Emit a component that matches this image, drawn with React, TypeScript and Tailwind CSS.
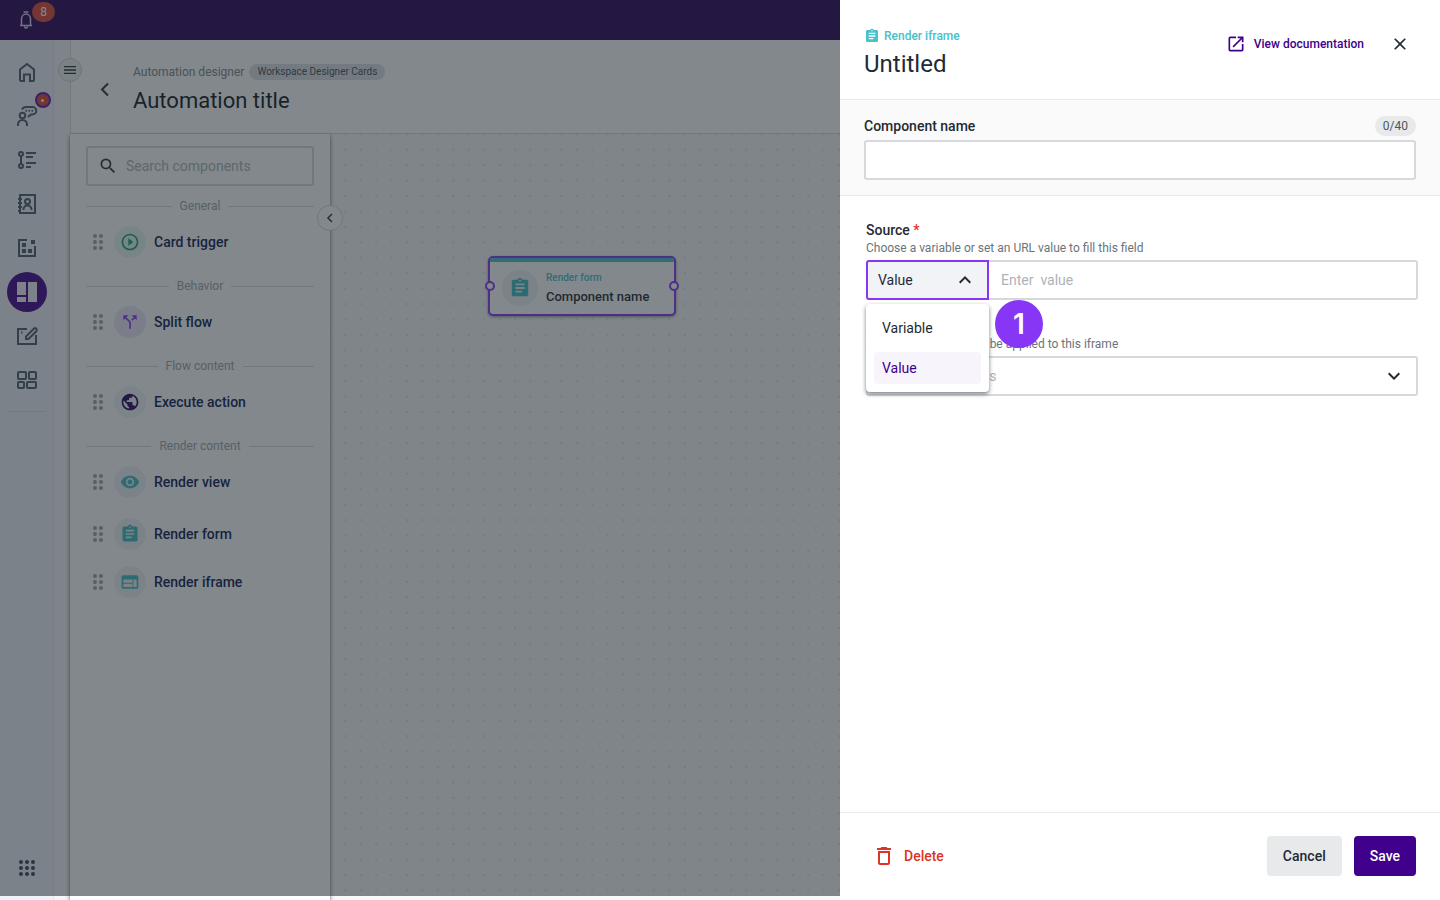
import { ReactNode, useState } from 'react'
import {
  MdAssignment,
  MdCallSplit,
  MdClose,
  MdDeleteOutline,
  MdKeyboardArrowDown,
  MdKeyboardArrowUp,
  MdMenu,
  MdOpenInNew,
  MdPlayCircleOutline,
  MdPublic,
  MdSearch,
  MdRemoveRedEye,
  MdWeb,
} from 'react-icons/md'

interface PaletteItem {
  label: string
  icon: ReactNode
  bg: string
}

interface PaletteSection {
  title: string
  groups: PaletteItem[][]
}

const sections: PaletteSection[] = [
  {
    title: 'General',
    groups: [[{ label: 'Card trigger', icon: <MdPlayCircleOutline className="size-5 text-[#10a56e]" />, bg: 'bg-[#eaf6f3]' }]],
  },
  {
    title: 'Behavior',
    groups: [[{ label: 'Split flow', icon: <MdCallSplit className="size-5 text-[#8836f5]" />, bg: 'bg-[#efe8fb]' }]],
  },
  {
    title: 'Flow content',
    groups: [[{ label: 'Execute action', icon: <MdPublic className="size-5 text-[#29005c]" />, bg: 'bg-[#f1f3f8]' }]],
  },
  {
    title: 'Render content',
    groups: [
      [{ label: 'Render view', icon: <MdRemoveRedEye className="size-5 text-[#3fbac4]" />, bg: 'bg-[#eff3f8]' }],
      [
        { label: 'Render form', icon: <MdAssignment className="size-5 text-[#3fbac4]" />, bg: 'bg-[#eff3f8]' },
        { label: 'Render iframe', icon: <MdWeb className="size-5 text-[#3fbac4]" />, bg: 'bg-[#eff3f8]' },
      ],
    ],
  },
]

function Glyph({ children }: { children: ReactNode }) {
  return (
    <svg className="size-6" viewBox="0 0 24 24" fill="none" stroke="currentColor" strokeWidth={2}>
      {children}
    </svg>
  )
}

const navItems = [
  {
    label: 'Home',
    icon: (
      <Glyph>
        <path d="M5 20V9.5l7-5.5 7 5.5V20a1 1 0 0 1-1 1h-3v-6.500H9V21H6a1 1 0 0 1-1-1z" />
      </Glyph>
    ),
  },
  {
    label: 'Conversations',
    icon: (
      <Glyph>
        <circle cx="7.500" cy="11.500" r="2.800" />
        <path d="M3 22v-1.500a4.500 4.500 0 0 1 9 0V22" />
        <path d="M7 5.500C7.800 4 9 3 11 3h6.500a3.700 3.700 0 0 1 0 7.500H16l-3 2.500" />
        <path d="M10.500 6.800h1.500M13.500 6.800H15M16.500 6.800H18" />
      </Glyph>
    ),
  },
  {
    label: 'Flows',
    icon: (
      <Glyph>
        <circle cx="6" cy="6" r="2" />
        <circle cx="6" cy="18" r="2" />
        <path d="M6 8v8M11 5h10M11 9h7M11 15h10M11 19h5" />
      </Glyph>
    ),
  },
  {
    label: 'Contacts',
    icon: (
      <Glyph>
        <path d="M5 3h15v18H5zM3 7h4M3 11h4M3 15h4M3 19h2" />
        <circle cx="12.500" cy="9.500" r="2.500" />
        <path d="M8.500 18v-.5a4 4 0 0 1 8 0v.5" />
      </Glyph>
    ),
  },
  {
    label: 'Reports',
    icon: (
      <Glyph>
        <path d="M12 4H4v16h16V10" />
        <path d="M16 4h4v4h-4zM7 7h4v4H7zM7 13h4v4H7zM13 13h4v4h-4z" fill="currentColor" stroke="none" />
      </Glyph>
    ),
  },
  {
    label: 'Workspace',
    active: true,
    icon: (
      <Glyph>
        <path d="M2 2h9v13H2zM2 17h9v5H2zM13 2h9v20h-9z" fill="currentColor" stroke="none" />
      </Glyph>
    ),
  },
  {
    label: 'Editor',
    icon: (
      <Glyph>
        <path d="M12 5H3v15h18v-9M6 8.500h1.500" />
        <path d="M11 12.500 19 4.500a1.800 1.800 0 0 1 2.500 2.500l-8 8H11z" />
      </Glyph>
    ),
  },
  {
    label: 'Modules',
    icon: (
      <Glyph>
        <rect x="3" y="4" width="8" height="7" rx="1" />
        <rect x="14" y="4" width="7" height="7" rx="1" />
        <rect x="3" y="14" width="6" height="6" rx="1" />
        <rect x="12" y="14" width="9" height="6" rx="1" />
      </Glyph>
    ),
  },
]

function TopBar() {
  return (
    <header className="flex h-10 shrink-0 items-center bg-[#290058] pl-[14px]">
      <button type="button" aria-label="Notifications" className="relative text-[#d9cdee]">
        <svg className="size-6" viewBox="0 0 24 24" fill="none" stroke="currentColor" strokeWidth={1.500}>
          <path d="M9.500 4h5M6 17.500h12M7.500 17.500V11a4.500 5 0 0 1 9 0v6.500M10.500 18.500a1.500 1.500 0 0 0 3 0" />
        </svg>
        <span className="absolute -top-[6px] left-[18px] flex h-5 w-[23px] items-center justify-center rounded-full bg-[#e04434] text-xs text-white">
          8
        </span>
      </button>
    </header>
  )
}

function SideNav() {
  return (
    <nav className="flex w-[54px] shrink-0 flex-col items-center border-r border-[#e4e5ee] bg-[#f1f1fa] pt-3 pb-3">
      <ul className="flex flex-col gap-1">
        {navItems.map((item) => (
          <li key={item.label} className="relative">
            <button
              type="button"
              aria-label={item.label}
              className={
                item.active
                  ? 'flex size-10 items-center justify-center rounded-full bg-[#40008c] text-[#f4f2fb]'
                  : 'flex size-10 items-center justify-center text-[#4b5b68]'
              }
            >
              {item.icon}
            </button>
            {item.label === 'Conversations' && (
              <span className="absolute -top-1 left-7 flex size-4 items-center justify-center rounded-full border-2 border-[#5a14b8] bg-[#e04434]">
                <span className="size-[3px] rounded-full bg-white" />
              </span>
            )}
          </li>
        ))}
      </ul>
      <hr className="mt-[11px] w-[38px] border-[#dcdde8]" />
      <button type="button" aria-label="All apps" className="mt-auto flex size-10 items-center justify-center text-[#36444f]">
        <svg className="size-6" viewBox="0 0 24 24" fill="currentColor">
          {[6, 12, 18].map((y) => [6, 12, 18].map((x) => <circle key={`${x}-${y}`} cx={x} cy={y} r="2" />))}
        </svg>
      </button>
    </nav>
  )
}

function DragHandle() {
  return (
    <svg className="h-4 w-6 text-[#9ba1ad]" viewBox="0 0 24 16" fill="currentColor">
      {[2, 8, 14].map((y) => [9, 15].map((x) => <circle key={`${x}-${y}`} cx={x} cy={y} r="2" />))}
    </svg>
  )
}

function PaletteRow({ item }: { item: PaletteItem }) {
  return (
    <li className="flex h-8 items-center">
      <DragHandle />
      <span className={`ml-1 flex size-8 items-center justify-center rounded-full ${item.bg}`}>{item.icon}</span>
      <span className="ml-2 text-sm font-medium text-[#0d1850]">{item.label}</span>
    </li>
  )
}

function ComponentPalette() {
  return (
    <aside className="relative z-10 w-[260px] shrink-0 bg-white px-4 pt-3 shadow-[0_2px_4px_rgba(30,40,60,0.7)]">
      <label className="flex h-10 items-center rounded-[3px] border-2 border-[#d5d9dd] px-[10px]">
        <MdSearch className="size-5 shrink-0 text-[#26313a]" />
        <input
          type="text"
          aria-label="Search components"
          placeholder="Search components"
          className="ml-2 w-full min-w-0 bg-transparent text-sm outline-none placeholder:text-[#adb3b8]"
        />
      </label>
      <div className="flex flex-col gap-[18px] pt-[10px]">
        {sections.map((section) => (
          <section key={section.title}>
            <h2 className="flex h-5 items-center gap-2 text-xs text-[#9ea4ac]">
              <span className="h-px flex-1 bg-[#d6d9dd]" />
              {section.title}
              <span className="h-px flex-1 bg-[#d6d9dd]" />
            </h2>
            <div className="flex flex-col gap-5 pt-[10px]">
              {section.groups.map((group) => (
                <ul key={group[0].label} className="flex flex-col gap-4">
                  {group.map((item) => (
                    <PaletteRow key={item.label} item={item} />
                  ))}
                </ul>
              ))}
            </div>
          </section>
        ))}
      </div>
      <button
        type="button"
        aria-label="Collapse components"
        className="absolute top-[71px] -right-[13px] flex size-[26px] items-center justify-center rounded-full border border-[#d5d8dc] bg-white text-[#26313a]"
      >
        <svg className="size-4" viewBox="0 0 16 16" fill="none" stroke="currentColor" strokeWidth={1.500}>
          <path d="m10 4-4 4 4 4" />
        </svg>
      </button>
    </aside>
  )
}

function Canvas() {
  return (
    <main className="relative flex-1 overflow-hidden bg-[#faf8f9]">
      <svg className="absolute inset-0 h-full w-full" aria-hidden="true">
        <defs>
          <pattern id="grid" x="14.300" y="-.6" width="15.430" height="15.430" patternUnits="userSpaceOnUse">
            <circle cx="1" cy="1" r=".8" fill="#c6c4c9" />
          </pattern>
        </defs>
        <rect width="100%" height="100%" fill="url(#grid)" />
      </svg>
      <article className="absolute top-[122px] left-[158px] h-[60px] w-[188px] rounded-[5px] border-2 border-[#8836f5] bg-white shadow-[0_1px_3px_rgba(30,40,60,0.5)]">
        <div className="h-1 rounded-t-[2px] bg-[#47c1ca]" />
        <div className="flex items-start gap-2 px-3 pt-2">
          <span className="flex size-9 items-center justify-center rounded-full bg-[#f0f3f8]">
            <MdAssignment className="size-[22px] text-[#3fbac4]" />
          </span>
          <div>
            <p className="text-[10px] leading-4 font-medium text-[#47c1ca]">Render form</p>
            <h3 className="text-[13px] leading-[22px] font-medium text-[#1f2730]">Component name</h3>
          </div>
        </div>
        <span className="absolute top-[23px] -left-[5px] size-[10px] rounded-full border-2 border-[#8836f5] bg-white" />
        <span className="absolute top-[23px] -right-[5px] size-[10px] rounded-full border-2 border-[#8836f5] bg-white" />
      </article>
    </main>
  )
}

function Workspace() {
  return (
    <div className="flex min-w-0 flex-1 flex-col">
      <div className="relative flex h-[94px] shrink-0 items-start border-b border-l border-[#d9dbe0] bg-white pt-6">
        <button
          type="button"
          aria-label="Toggle menu"
          className="absolute top-[18px] -left-[13px] flex size-6 items-center justify-center rounded-full border border-[#d0d3d6] bg-[#f0f1f2] text-[#26313a]"
        >
          <MdMenu className="size-4" />
        </button>
        <button type="button" aria-label="Back" className="mt-[13px] ml-[22px] text-[#26313a]">
          <svg className="size-6" viewBox="0 0 24 24" fill="none" stroke="currentColor" strokeWidth={2}>
            <path d="m15 6.500-6 6 6 6" />
          </svg>
        </button>
        <div className="ml-4">
          <div className="flex items-center gap-[5px]">
            <span className="text-xs text-[#7c848c]">Automation designer</span>
            <span className="rounded-full bg-[#dfe1e3] px-2 text-[10px] leading-4 text-[#45505a]">Workspace Designer Cards</span>
          </div>
          <h1 className="mt-[5px] text-[22px] leading-8 text-[#10161c]">Automation title</h1>
        </div>
      </div>
      <div className="flex min-h-0 flex-1">
        <ComponentPalette />
        <Canvas />
      </div>
    </div>
  )
}

function SourceField() {
  const options = ['Variable', 'Value']
  const [source, setSource] = useState('Value')

  return (
    <div className="relative">
      <label htmlFor="source-type" className="block text-sm leading-5 font-medium text-[#1f2a33]">
        Source <span className="text-[#dc3426]">*</span>
      </label>
      <p className="text-xs leading-4 text-[#6b747c]">Choose a variable or set an URL value to fill this field</p>
      <div className="mt-1 flex h-10">
        <div className="relative w-[123px] shrink-0">
          <select
            id="source-type"
            value={source}
            onChange={(e) => setSource(e.target.value)}
            className="h-full w-full appearance-none rounded-l-[3px] border-2 border-[#8836f5] bg-[#f2f3f6] px-[10px] text-sm text-[#1f2a33] outline-none"
          >
            {options.map((option) => (
              <option key={option}>{option}</option>
            ))}
          </select>
          <MdKeyboardArrowUp className="pointer-events-none absolute top-2 right-3 size-6 text-[#1f2a33]" />
        </div>
        <input
          type="text"
          aria-label="Source value"
          placeholder="Enter  value"
          className="min-w-0 flex-1 rounded-r-[3px] border-2 border-l-0 border-[#d5d9dd] bg-white px-3 text-sm outline-none placeholder:text-[#adb3b8]"
        />
      </div>
      <ul className="absolute top-full left-0 z-20 mt-1 w-[123px] rounded bg-white p-2 shadow-[0_2px_4px_rgba(30,40,50,0.6)]">
        {options.map((option) => (
          <li key={option} className="mt-2 first:mt-0">
            <button
              type="button"
              onClick={() => setSource(option)}
              className={
                option === source
                  ? 'h-8 w-full rounded bg-[#f7f4fc] px-2 text-left text-sm text-[#40008c]'
                  : 'h-8 w-full rounded px-2 text-left text-sm text-[#1f2a33]'
              }
            >
              {option}
            </button>
          </li>
        ))}
      </ul>
      <span className="absolute top-full left-[129px] z-20 flex size-12 items-center justify-center rounded-full bg-[#8836f5] font-[Inter] text-[28px] font-semibold text-white">
        1
      </span>
    </div>
  )
}

function ComponentDrawer() {
  const [name, setName] = useState('')

  return (
    <aside className="absolute inset-y-0 right-0 z-40 flex w-[600px] max-w-full flex-col bg-white">
      <header className="flex h-[100px] shrink-0 items-start justify-between border-b border-[#e7e9ea] px-6 pt-7">
        <div>
          <p className="flex items-center gap-1 text-xs leading-4 font-medium text-[#47c1ca]">
            <MdAssignment className="size-4" />
            Render iframe
          </p>
          <h2 className="mt-1 text-2xl leading-8 text-[#1f2a33]">Untitled</h2>
        </div>
        <div className="flex h-8 items-center">
          <a href="#docs" className="flex items-center gap-2 text-xs font-medium text-[#40008c]">
            <MdOpenInNew className="size-5" />
            View documentation
          </a>
          <button type="button" aria-label="Close" className="ml-5 flex size-8 items-center justify-center text-[#1f2a33]">
            <MdClose className="size-5" />
          </button>
        </div>
      </header>
      <div className="h-24 shrink-0 border-b border-[#e7e9ea] bg-[#fafafa] px-6 pt-4">
        <div className="flex h-5 items-center justify-between">
          <label htmlFor="component-name" className="text-sm font-medium text-[#1f2a33]">
            Component name
          </label>
          <span className="rounded-full bg-[#e8e9eb] px-2 text-xs leading-5 text-[#4b5761]">{name.length}/40</span>
        </div>
        <input
          id="component-name"
          type="text"
          maxLength={40}
          value={name}
          onChange={(e) => setName(e.target.value)}
          className="mt-1 h-10 w-full rounded-[3px] border-2 border-[#d5d9dd] bg-white px-3 text-sm outline-none"
        />
      </div>
      <div className="flex flex-1 flex-col gap-4 pt-6 pr-[22px] pl-[26px]">
        <SourceField />
        <div>
          <label htmlFor="attributes" className="block text-sm leading-5 font-medium text-[#1f2a33]">
            Attributes
          </label>
          <p className="text-xs leading-4 text-[#6b747c]">Select the attributes to be applied to this iframe</p>
          <div className="relative mt-1 h-10">
            <select
              id="attributes"
              defaultValue=""
              className="h-full w-full appearance-none rounded-[3px] border-2 border-[#d5d9dd] bg-white px-[10px] text-sm text-[#adb3b8] outline-none"
            >
              <option value="">Select permissions</option>
            </select>
            <MdKeyboardArrowDown className="pointer-events-none absolute top-2 right-3 size-6 text-[#1f2a33]" />
          </div>
        </div>
      </div>
      <footer className="flex h-[88px] shrink-0 items-start border-t border-[#e7e9ea] px-6 pt-[23px]">
        <button type="button" className="flex h-10 items-center gap-2 px-2 text-sm font-medium text-[#dc3426]">
          <MdDeleteOutline className="size-6" />
          Delete
        </button>
        <button type="button" className="ml-auto h-10 rounded bg-[#e8e9eb] px-4 text-sm font-medium text-[#1f2a33]">
          Cancel
        </button>
        <button type="button" className="ml-3 h-10 rounded bg-[#40008c] px-4 text-sm font-medium text-white">
          Save
        </button>
      </footer>
    </aside>
  )
}

export default function App() {
  return (
    <div className="relative flex h-screen flex-col overflow-hidden font-[Roboto,sans-serif]">
      <TopBar />
      <div className="flex min-h-0 flex-1">
        <SideNav />
        <div className="w-4 shrink-0 bg-[#f6f6fa]" />
        <Workspace />
      </div>
      <div className="absolute inset-x-0 top-0 bottom-1 z-30 bg-[#202b32]/56" />
      <ComponentDrawer />
    </div>
  )
}
